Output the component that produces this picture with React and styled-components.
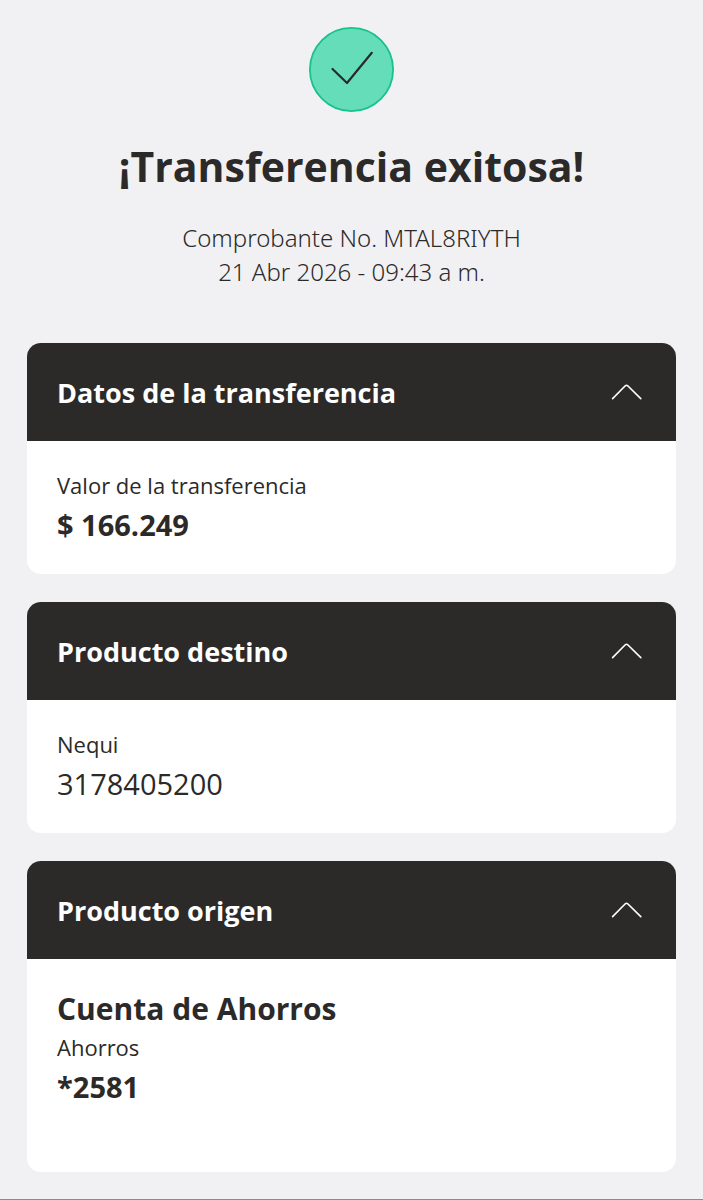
import React, { useState } from 'react'
import styled, { createGlobalStyle } from 'styled-components';

const GlobalStyle = createGlobalStyle`
	* {
		box-sizing: border-box;
		margin: 0;
		padding: 0;
	}

	body {
		background-color: #f1f1f4;
		color: #2c2a29;
		font-family: 'Open Sans', 'Noto Sans', sans-serif;
	}
`;

const Page = styled.main`
	display: flex;
	flex-direction: column;
	min-height: 100vh;
	padding: 27px 27px 26px;
	border-bottom: 1px solid #8c8c8f;
`;

const Header = styled.header`
	display: flex;
	flex-direction: column;
	align-items: center;
	margin-bottom: 54px;
	text-align: center;
`;

const SuccessIcon = styled.svg`
	display: block;
	width: 85px;
	height: 85px;
	margin-bottom: 24px;
`;

const Title = styled.h1`
	font-size: 41px;
	font-weight: 700;
	line-height: 60px;
	margin-bottom: 25px;
`;

const Meta = styled.p`
	font-family: 'Noto Sans', 'Open Sans', sans-serif;
	font-size: 24px;
	font-weight: 300;
	line-height: 34px;
`;

const Cards = styled.div`
	display: flex;
	flex-direction: column;
	gap: 28px;
`;

const Card = styled.section`
	overflow: hidden;
	border-radius: 14px;
	background-color: #fff;
`;

const CardToggle = styled.button`
	display: flex;
	align-items: center;
	justify-content: space-between;
	width: 100%;
	height: 98px;
	padding: 0 33px 0 30px;
	border: none;
	background-color: #2c2a29;
	color: #fff;
	font-family: inherit;
	font-size: 27px;
	font-weight: 700;
	text-align: left;
	cursor: pointer;
`;

const Chevron = styled.svg`
	display: block;
	width: 32px;
	height: 18px;
	transform: ${(props) => (props.$open ? 'none' : 'rotate(180deg)')};
`;

const CardBody = styled.div`
	padding: 28px 30px ${(props) => (props.$tall ? 61 : 25)}px;
`;

const Account = styled.h3`
	font-size: 30px;
	font-weight: 700;
	line-height: 44px;
`;

const Label = styled.p`
	font-size: 22px;
	line-height: 32px;
`;

const Value = styled.p`
	font-size: 29px;
	font-weight: ${(props) => (props.$bold ? 700 : 400)};
	line-height: 48px;
`;

function Section({title,tall,children}){
	const [open,setOpen] = useState(true);

	return <Card>
		<h2>
			<CardToggle type='button' aria-expanded={open} onClick={() => setOpen((o) => !o)}>
				{title}
				<Chevron $open={open} viewBox='0 0 32 18' fill='none' aria-hidden='true'>
					<path
						d='M1.6 15.6 L14.3 2.8 Q15.5 1.7 16.7 2.8 L29.8 15.6'
						stroke='#fff'
						strokeWidth='1.6'
						strokeLinecap='round'
						strokeLinejoin='round'
					/>
				</Chevron>
			</CardToggle>
		</h2>
		{open && <CardBody $tall={tall}>{children}</CardBody>}
	</Card>
}

export default function App(){
	return <>
		<GlobalStyle />
		<Page>
			<Header>
				<SuccessIcon viewBox='0 0 85 85' fill='none' aria-hidden='true'>
					<circle cx='42.5' cy='42.5' r='41.6' fill='#66ddb9' stroke='#16c38b' strokeWidth='1.8' />
					<path
						d='M23.5 42 L38 56 L62.8 25.8'
						stroke='#2c2a29'
						strokeWidth='2.2'
						strokeLinecap='round'
						strokeLinejoin='round'
					/>
				</SuccessIcon>
				<Title>¡Transferencia exitosa!</Title>
				<Meta>Comprobante No. MTAL8RIYTH</Meta>
				<Meta>21 Abr 2026 - 09:43 a m.</Meta>
			</Header>

			<Cards>
				<Section title='Datos de la transferencia'>
					<Label>Valor de la transferencia</Label>
					<Value $bold>$ 166.249</Value>
				</Section>
				<Section title='Producto destino'>
					<Label>Nequi</Label>
					<Value>3178405200</Value>
				</Section>
				<Section title='Producto origen' tall>
					<Account>Cuenta de Ahorros</Account>
					<Label>Ahorros</Label>
					<Value $bold>*2581</Value>
				</Section>
			</Cards>
		</Page>
	</>
}
